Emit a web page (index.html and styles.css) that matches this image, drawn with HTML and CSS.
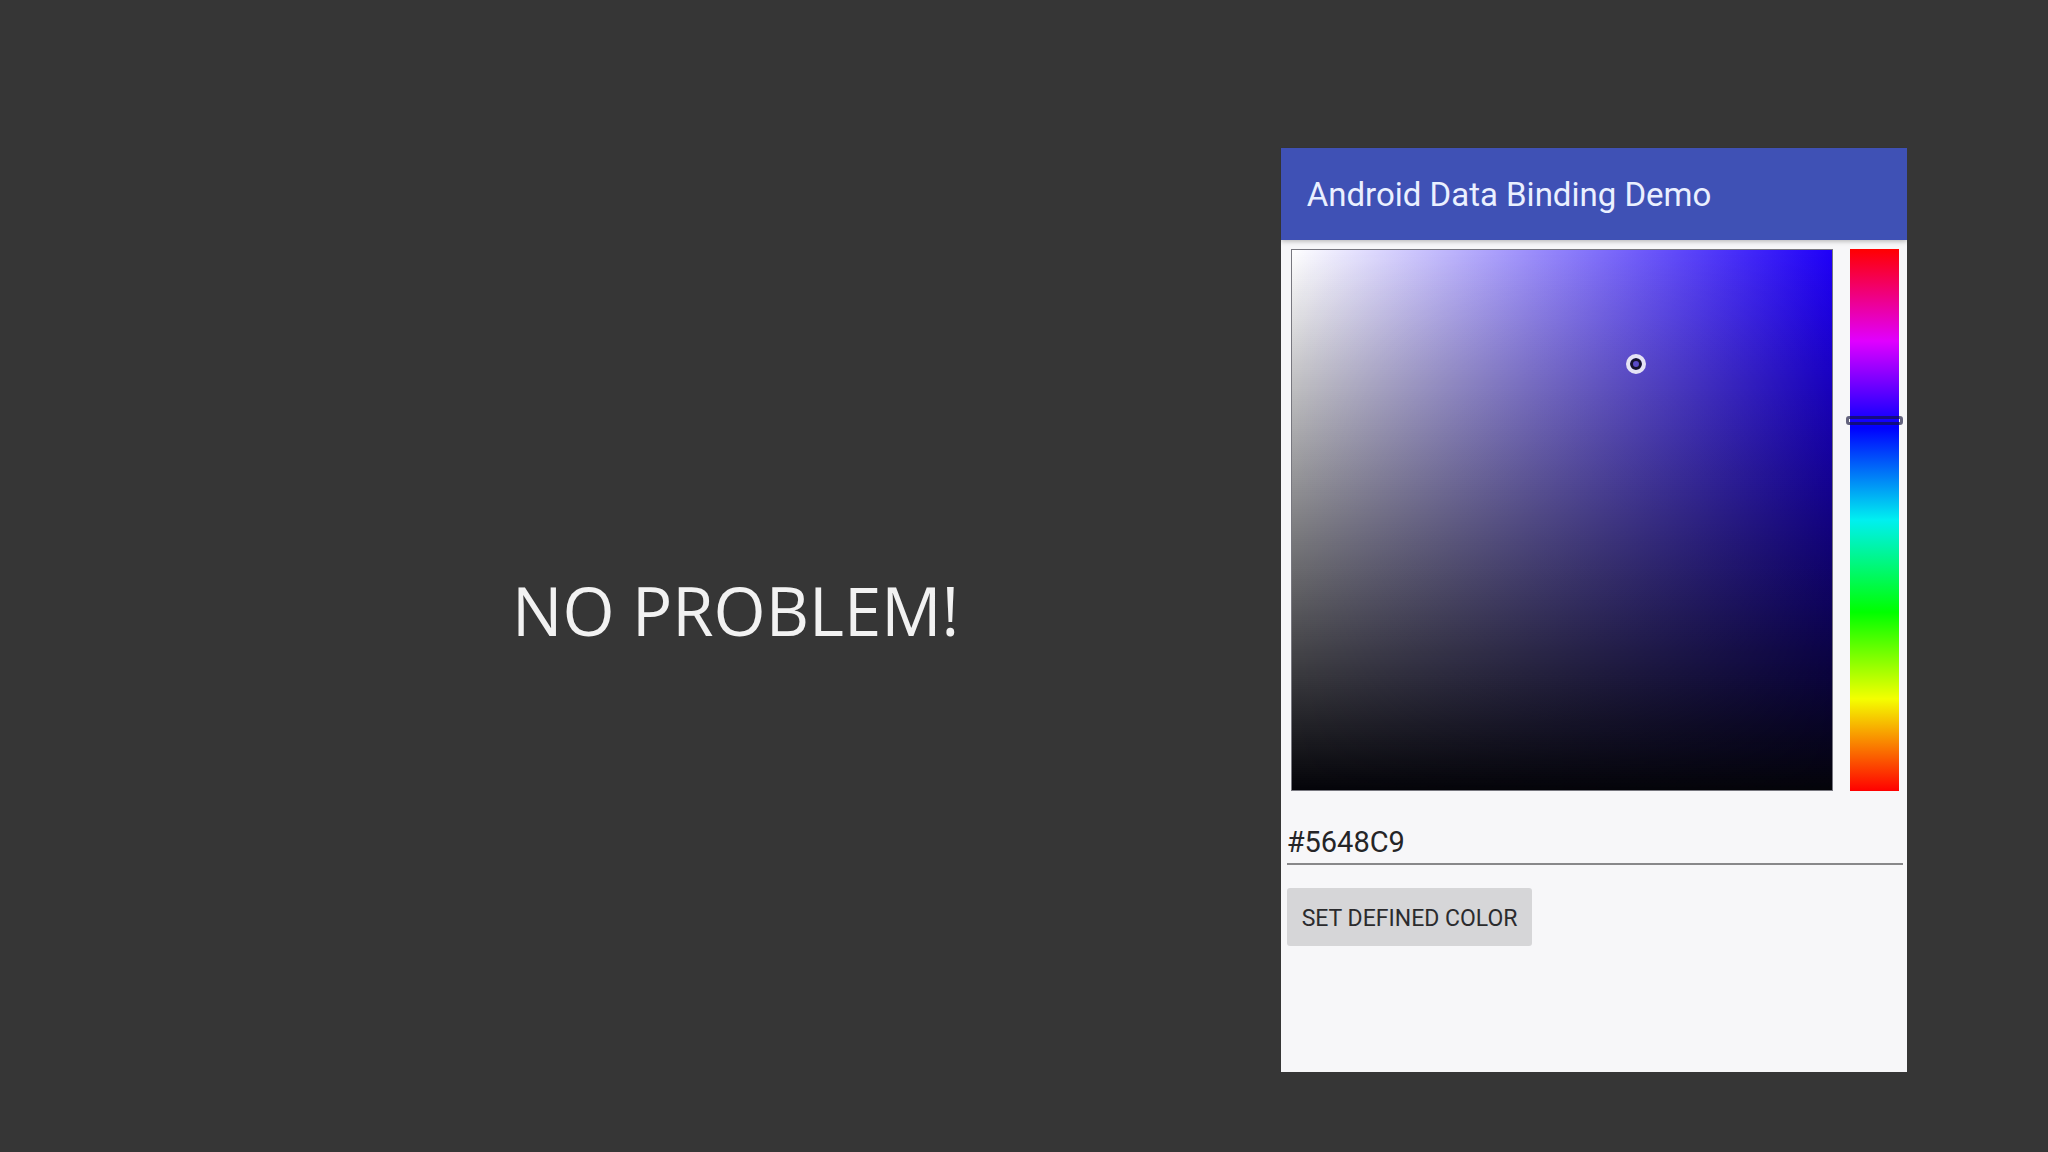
FILE: index.html
```html
<!DOCTYPE html>
<html lang="en">
<head>
    <meta charset="UTF-8">
    <meta name="viewport" content="width=device-width, initial-scale=1.0">
    <title>Android Data Binding Demo</title>
    <link rel="stylesheet" href="styles.css">
</head>
<body>

    <main class="slide">
        <h1 class="slide-title">NO PROBLEM!</h1>

        <section class="phone">
            <header class="app-bar">
                <h2>Android Data Binding Demo</h2>
            </header>

            <div class="picker">
                <div class="shade">
                    <span class="shade-cursor"></span>
                </div>
                <div class="hue">
                    <input type="range" min="0" max="360" value="113" aria-label="Hue">
                </div>
            </div>

            <form class="color-form">
                <input type="text" class="hex" value="#5648C9" aria-label="Color">
                <button type="button">SET DEFINED COLOR</button>
            </form>
        </section>
    </main>

</body>
</html>
```
FILE: styles.css
```css
* {
    box-sizing: border-box;
}
body {
    margin: 0;
    background-color: #363636;
    font-family: Roboto, "Liberation Sans", sans-serif;
}
.slide {
    display: flex;
    align-items: center;
    min-height: 100vh;
    padding: 68px 141px 0 25%;
}
.slide-title {
    flex: 1;
    margin: 0;
    color: #f2f2f2;
    font-family: "Open Sans", sans-serif;
    font-size: 67px;
    font-weight: 400;
    line-height: 80px;
    white-space: nowrap;
}
.phone {
    width: 44.9%;
    padding-bottom: 126px;
    background-color: #f7f7f9;
}
.app-bar {
    position: relative;
    padding: 2px 26px 0;
    background-color: #3f51b5;
    box-shadow: 0 1px 5px rgba(0, 0, 0, 0.3);
    clip-path: inset(0 0 -10px 0);
}
.app-bar h2 {
    margin: 0;
    color: #eaf0ff;
    font-size: 33px;
    font-weight: 400;
    line-height: 90px;
}

/* color picker */
.picker {
    display: flex;
    gap: 17px;
    padding: 9px 8px 0 10px;
}
.shade {
    position: relative;
    flex: 1;
    aspect-ratio: 1;
    border: 1px solid #77777f;
    background: linear-gradient(to top, #040409, rgba(4, 4, 9, 0)), linear-gradient(to right, #fff, #1f00f8);
}
.shade-cursor {
    position: absolute;
    top: 21%;
    left: 64%;
    width: 20px;
    height: 20px;
    margin: -9px -11px;
    border: 4px solid #e4e2f4;
    border-radius: 50%;
    box-shadow: inset 0 0 0 3px #15122e;
}
.hue {
    position: relative;
    width: 49px;
    background: linear-gradient(#f00, #e000ff 17%, #00f 33%, #00f0f0 50%, #0f0 67%, #f4ff00 83%, #f00);
}
.hue input {
    position: absolute;
    top: 0;
    left: -4px;
    width: 57px;
    height: 100%;
    margin: 0;
    appearance: none;
    background: transparent;
    writing-mode: vertical-lr;
}
.hue input::-webkit-slider-thumb {
    appearance: none;
    width: 57px;
    height: 9px;
    border: 3px solid rgba(20, 20, 60, 0.65);
    border-radius: 3px;
}

/* hex value and button */
.color-form {
    padding: 30px 4px 0 6px;
}
.hex {
    display: block;
    width: 100%;
    height: 44px;
    margin-bottom: 23px;
    padding: 0;
    border: none;
    border-bottom: 2px solid #88888a;
    background: transparent;
    color: #252527;
    font-family: inherit;
    font-size: 29px;
}
button {
    height: 58px;
    padding: 2px 15px 0;
    border: none;
    border-radius: 3px;
    background-color: #d6d6d8;
    color: #2b2b2d;
    font-family: inherit;
    font-size: 23px;
}
```
